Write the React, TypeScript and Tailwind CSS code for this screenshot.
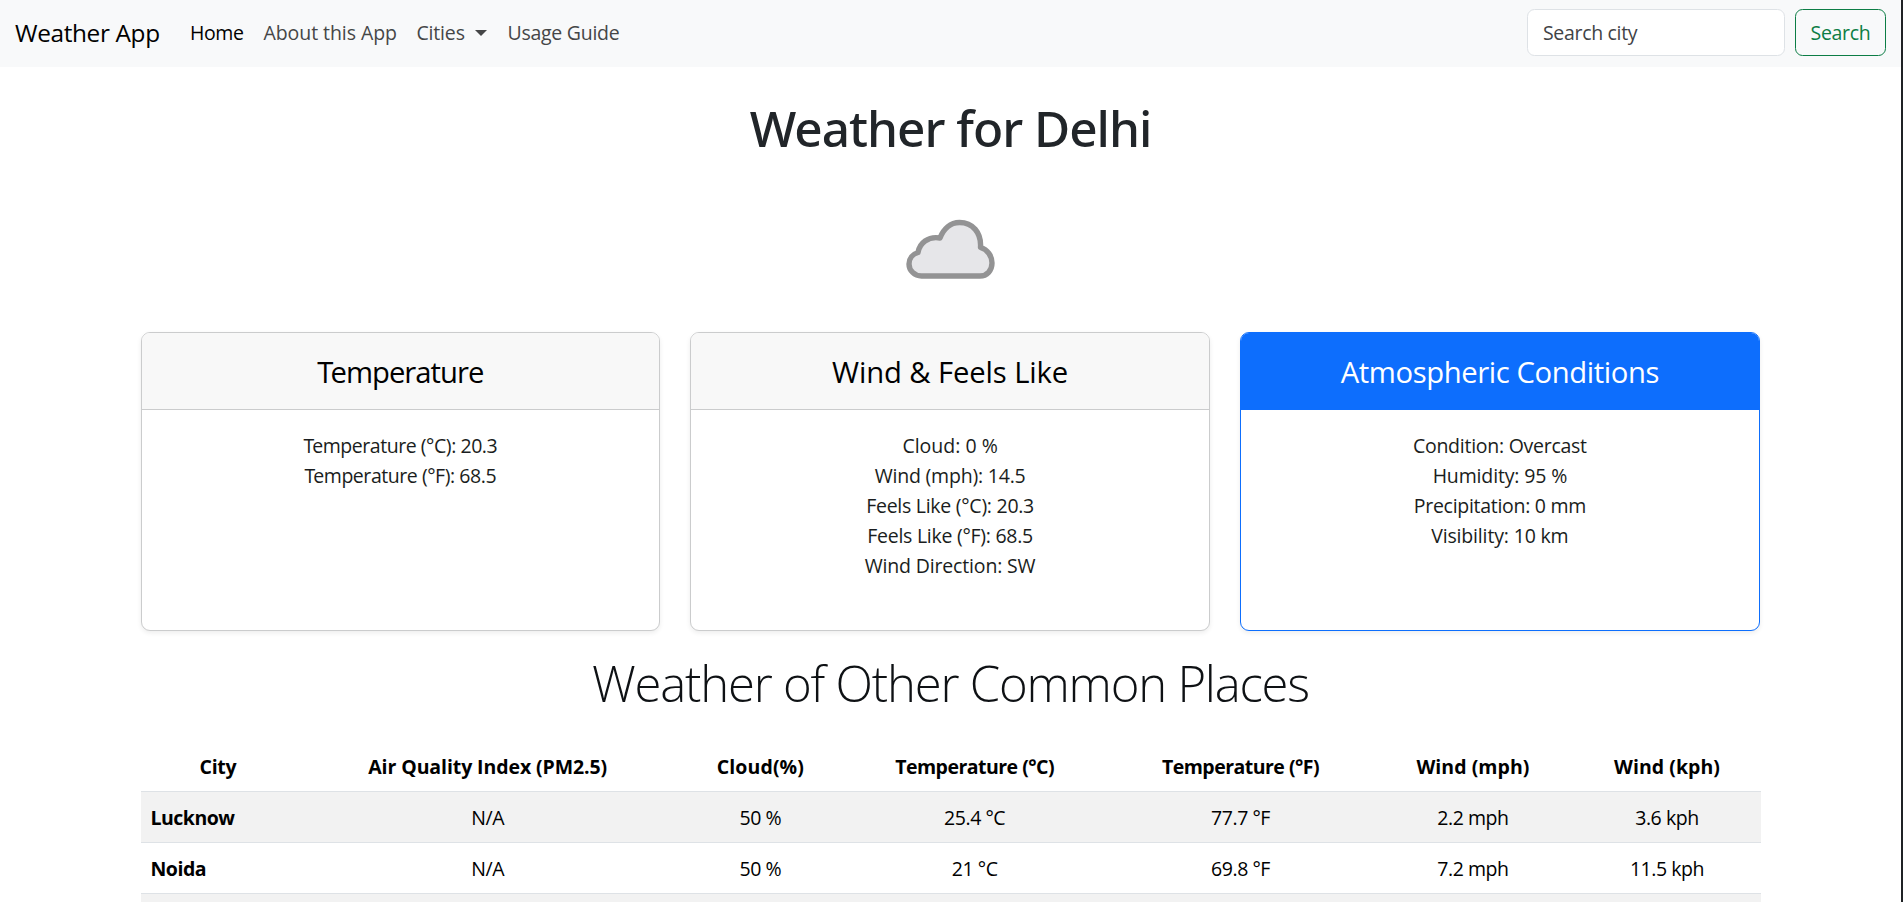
import type { ReactNode } from "react";

type Line = { text: string; tracking: string };

type CardData = {
  title: ReactNode;
  titleTracking: string;
  primary?: boolean;
  lines: Line[];
};

const cards: CardData[] = [
  {
    title: (
      <>
        <span className="tracking-[-2.9px]">T</span>emperature
      </>
    ),
    titleTracking: "tracking-[-1px]",
    lines: [
      { text: "Temperature (°C): 20.3", tracking: "tracking-[-0.45px] first-letter:tracking-[-2px]" },
      { text: "Temperature (°F): 68.5", tracking: "tracking-[-0.45px] first-letter:tracking-[-2px]" },
    ],
  },
  {
    title: "Wind & Feels Like",
    titleTracking: "tracking-[-0.11px]",
    lines: [
      { text: "Cloud: 0 %", tracking: "tracking-[0px]" },
      { text: "Wind (mph): 14.5", tracking: "tracking-[-0.2px]" },
      { text: "Feels Like (°C): 20.3", tracking: "tracking-[-0.27px]" },
      { text: "Feels Like (°F): 68.5", tracking: "tracking-[-0.27px]" },
      { text: "Wind Direction: SW", tracking: "tracking-[-0.16px]" },
    ],
  },
  {
    title: "Atmospheric Conditions",
    titleTracking: "tracking-[-0.4px]",
    primary: true,
    lines: [
      { text: "Condition: Overcast", tracking: "tracking-[-0.26px]" },
      { text: "Humidity: 95 %", tracking: "tracking-[-0.15px]" },
      { text: "Precipitation: 0 mm", tracking: "tracking-[-0.29px]" },
      { text: "Visibility: 10 km", tracking: "tracking-[-0.16px]" },
    ],
  },
];

const columns = [
  { label: "City", width: "w-[154.8px]", tracking: "tracking-[-0.3px]" },
  { label: "Air Quality Index (PM2.5)", width: "w-[384.8px]", tracking: "tracking-[-0.09px]" },
  { label: "Cloud(%)", width: "w-[160.6px]", tracking: "tracking-[0.1px]" },
  { label: "Temperature (°C)", width: "w-[267.9px]", tracking: "tracking-[-0.52px]" },
  { label: "Temperature (°F)", width: "w-[263.9px]", tracking: "tracking-[-0.52px]" },
  { label: "Wind (mph)", width: "w-[201px]", tracking: "tracking-[0.05px]" },
  { label: "Wind (kph)", width: "w-[187px]", tracking: "tracking-[0.03px]" },
];

const rows = [
  ["Lucknow", "N/A", "50 %", "25.4 °C", "77.7 °F", "2.2 mph", "3.6 kph"],
  ["Noida", "N/A", "50 %", "21 °C", "69.8 °F", "7.2 mph", "11.5 kph"],
];

function Navbar() {
  return (
    <nav className="flex h-[67px] shrink-0 items-center bg-[#f8f9fa] px-[15px] pb-[2px]">
      <a className="mr-[20px] w-[145px] whitespace-nowrap text-[24.4px] leading-[37px] tracking-[-0.36px] text-black">
        Weather App
      </a>
      <div className="flex flex-1 items-center text-[19.5px] leading-[30px] text-[#454647]">
        <a className="w-[73.5px] whitespace-nowrap px-[10px] tracking-[-0.4px] text-black">Home</a>
        <a className="w-[153px] whitespace-nowrap px-[10px] tracking-[-0.07px]">About this App</a>
        <a className="flex w-[91px] items-center whitespace-nowrap pl-[10px] tracking-[-0.18px]">
          <span className="w-[58.5px]">Cities</span>
          <span className="h-0 w-0 border-x-[6px] border-t-[6px] border-x-transparent border-t-[#454647]" />
        </a>
        <a className="whitespace-nowrap px-[10px] tracking-[-0.27px]">Usage Guide</a>
      </div>
      <form className="flex gap-[10px] text-[19.5px] leading-[30px]">
        <input
          className="h-[47px] w-[258px] rounded-[7.5px] border border-[#dee2e6] bg-white px-[15px] tracking-[-0.32px] placeholder:text-[#3f4346] placeholder:opacity-100"
          placeholder="Search city"
        />
        <button
          type="button"
          className="h-[47px] w-[91px] rounded-[7.5px] border border-[#0c7d45] tracking-[-0.3px] text-[#0c7d45]"
        >
          Search
        </button>
      </form>
    </nav>
  );
}

function CloudIcon() {
  return (
    <svg className="h-[80px] w-[120px]" viewBox="0 0 120 80" fill="none">
      <path
        d="M31 59.500 C24 59.500 18.500 54 18.500 47.500 C18.500 42 22.500 37.500 27.500 36 C29 26.500 37.500 19.500 49.500 21.500 C53 12.500 60 6 69 6 C82 6 91 16 90 31 C97 33 101.500 39.500 101.500 46.500 C101.500 54 96.500 59.500 89.500 59.500 Z"
        transform="translate(-0.500 0.500)"
        fill="#e6e6e9"
        stroke="#939394"
        strokeWidth="5.400"
        strokeLinejoin="round"
      />
    </svg>
  );
}

function Card({ card }: { card: CardData }) {
  return (
    <section
      className={`h-[299px] w-[519.6px] overflow-hidden rounded-[9px] border bg-white text-center shadow-[0_2px_5px_rgba(0,0,0,0.075)] ${
        card.primary ? "border-[#0d6efd]" : "border-[#cbcccd]"
      }`}
    >
      <h4
        className={`h-[77px] border-b pt-[21px] text-[29.25px] leading-[36px] ${card.titleTracking} ${
          card.primary ? "border-[#0d6efd] bg-[#0d6efd] text-white" : "border-[#cbcccd] bg-[#f8f8f8] text-black"
        }`}
      >
        {card.title}
      </h4>
      <ul className="pt-[21px] text-[19.5px] leading-[30px] text-[#1a1d20]">
        {card.lines.map((line) => (
          <li key={line.text} className={line.tracking}>
            {line.text}
          </li>
        ))}
      </ul>
    </section>
  );
}

function PlacesTable() {
  return (
    <table className="w-[1620px] table-fixed border-separate border-spacing-0 text-center text-[19.5px] leading-[30px] text-black">
      <thead>
        <tr className="h-[51px]">
          {columns.map((c) => (
            <th
              key={c.label}
              className={`whitespace-nowrap border-b border-[#dee2e6] p-0 pt-px font-bold ${c.width} ${c.tracking}`}
            >
              {c.label}
            </th>
          ))}
        </tr>
      </thead>
      <tbody>
        {rows.map(([city, ...values]) => (
          <tr key={city} className="h-[51px] odd:bg-[#f2f2f2]">
            <th className="border-b border-[#dee2e6] p-0 pl-[10px] pt-px text-left font-bold tracking-[-0.5px]">
              {city}
            </th>
            {values.map((v, i) => (
              <td key={i} className="border-b border-[#dee2e6] p-0 pt-px tracking-[-0.45px]">
                {v}
              </td>
            ))}
          </tr>
        ))}
        <tr className="h-[51px] bg-[#f2f2f2]">
          <td colSpan={7} className="p-0" />
        </tr>
      </tbody>
    </table>
  );
}

export default function App() {
  return (
    <div className="flex h-[902px] w-[1903px] overflow-hidden bg-white font-['Open_Sans','Noto_Sans',sans-serif] text-[#212529]">
      <div className="flex w-[1901px] flex-col">
        <Navbar />
        <main className="flex flex-col items-center">
          <h1 className="mt-[31px] h-[60px] font-['Noto_Sans',sans-serif] text-[49.5px] font-medium leading-[60px] tracking-[-1px]">
            Weather for Delhi
          </h1>
          <div className="mt-[58px] flex h-[80px] justify-center">
            <CloudIcon />
          </div>
          <div className="mr-[0.8px] mt-[36px] flex gap-[30.2px]">
            {cards.map((card, i) => (
              <Card key={i} card={card} />
            ))}
          </div>
          <h2 className="mt-[22px] h-[60px] text-[49px] font-light leading-[60px] tracking-[-1.21px] text-[#0e1114]">
            Weather of Other Common Places
          </h2>
          <div className="mt-[28px]">
            <PlacesTable />
          </div>
        </main>
      </div>
      <div className="w-[2px] bg-[#1f2225]" />
    </div>
  );
}
